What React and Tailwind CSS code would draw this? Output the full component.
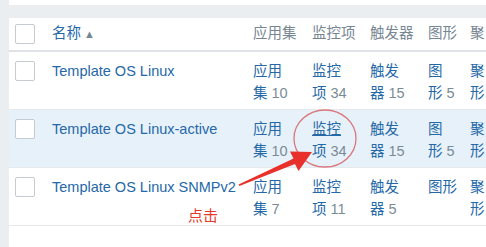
import React from "react";

const rows = [
  { name: "Template OS Linux", apps: "10", items: "34", triggers: "15", graphs: "5" },
  { name: "Template OS Linux-active", apps: "10", items: "34", triggers: "15", graphs: "5", active: true },
  { name: "Template OS Linux SNMPv2", apps: "7", items: "11", triggers: "5", graphs: "" },
];

const cols = "grid grid-cols-[43px_201px_59px_58px_58px_42px_1fr]";

function Checkbox() {
  return <div className="w-[20px] h-[20px] border border-[#c5cbd0] rounded-[2px] bg-white" />;
}

// link that wraps after the first part, count in grey
function Split({ top, bottom, count, underline }) {
  return (
    <div className="leading-[22px]">
      <div className={`text-[#2468a8] ${underline ? "underline" : ""}`}>{top}</div>
      <div>
        <span className="text-[#2468a8]">{bottom}</span>
        {count && <span className="text-[#7a8b96] ml-[4px]">{count}</span>}
      </div>
    </div>
  );
}

export default function App() {
  return (
    <div className="relative w-[486px] h-[247px] overflow-hidden bg-[#ebeef0] font-['Liberation_Sans','Noto_Sans_CJK_SC',sans-serif] text-[14.5px]">
      <div className="ml-[9px] h-[5px] bg-white" />

      <div className="ml-[9px] mt-[13px] bg-white h-[230px]">
        {/* header */}
        <div className={`${cols} h-[34px] items-center border-b-2 border-[#dfe3e7] text-[#768692]`}>
          <div className="pl-[6px]">
            <Checkbox />
          </div>
          <div className="text-[#2468a8]">
            名称<span className="text-[#768692] text-[11px] ml-[3px]">▲</span>
          </div>
          <div>应用集</div>
          <div>监控项</div>
          <div>触发器</div>
          <div>图形</div>
          <div className="whitespace-nowrap">聚</div>
        </div>

        {rows.map((r) => (
          <div
            key={r.name}
            className={`${cols} h-[58px] pt-[8px] border-b border-[#e6e9ec] ${r.active ? "bg-[#e7f1fa]" : ""}`}
          >
            <div className="pl-[6px] pt-px">
              <Checkbox />
            </div>
            <div className="leading-[22px] text-[#2468a8] whitespace-nowrap">{r.name}</div>
            <Split top="应用" bottom="集" count={r.apps} />
            <Split top="监控" bottom="项" count={r.items} underline={r.active} />
            <Split top="触发" bottom="器" count={r.triggers} />
            {r.graphs ? (
              <Split top="图" bottom="形" count={r.graphs} />
            ) : (
              <div className="leading-[22px] text-[#2468a8]">图形</div>
            )}
            <Split top="聚" bottom="形" />
          </div>
        ))}
      </div>

      {/* annotation: circle + arrow + label */}
      <svg className="absolute left-0 top-0" width="486" height="247" viewBox="0 0 486 247">
        <ellipse cx="325" cy="138.5" rx="31" ry="28.5" fill="none" stroke="#d9777b" strokeWidth="1.3" />
        <polygon
          points="239.4,186 295,164 298.5,171 312,152 290,151.5 293.5,158.5 238.6,184.6"
          fill="#e8312a"
        />
      </svg>
      <div className="absolute left-[188px] top-[205px] text-[15px] leading-[20px] text-[#e8372a] font-['Noto_Sans_CJK_SC',sans-serif]">
        点击
      </div>
    </div>
  );
}
